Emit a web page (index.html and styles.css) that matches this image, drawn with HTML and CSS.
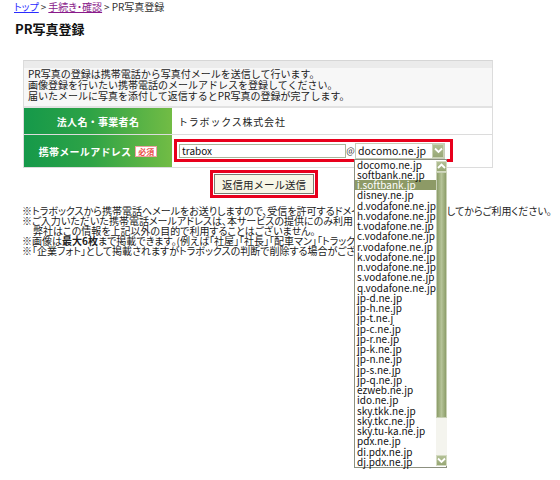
FILE: index.html
```html
<!DOCTYPE html>
<html lang="ja">
<head>
<meta charset="utf-8">
<title>PR写真登録</title>
<link rel="stylesheet" href="styles.css">
</head>
<body>
<div class="crumb"><a href="#" class="top">トップ</a><span class="gt">&gt;</span><a href="#" class="visited">手続き・確認</a><span class="gt">&gt;</span>PR写真登録</div>
<h1 class="title">PR写真登録</h1>
<div class="panel">
  <div class="intro">
    <p>PR写真の登録は携帯電話から写真付メールを送信して行います。</p>
    <p>画像登録を行いたい携帯電話のメールアドレスを登録してください。</p>
    <p>届いたメールに写真を添付して返信するとPR写真の登録が完了します。</p>
  </div>
  <div class="row row1">
    <div class="th">法人名・事業者名</div>
    <div class="td">トラボックス株式会社</div>
  </div>
  <div class="row row2">
    <div class="th">携帯メールアドレス<span class="req">必須</span></div>
    <div class="td">
      <div class="redbox">
        <div class="input">trabox</div>
        <span class="at">@</span>
        <div class="select">
          <span class="sel-text">docomo.ne.jp</span>
          <span class="sel-arrow"><svg width="9" height="7" viewBox="0 0 9 7"><path d="M1 1.5 L4.5 5 L8 1.5" fill="none" stroke="#fff" stroke-width="1.8"/></svg></span>
          <div class="dropdown">
            <ul class="options">
              <li>docomo.ne.jp</li>
              <li>softbank.ne.jp</li>
              <li class="hl">i.softbank.jp</li>
              <li>disney.ne.jp</li>
              <li>d.vodafone.ne.jp</li>
              <li>h.vodafone.ne.jp</li>
              <li>t.vodafone.ne.jp</li>
              <li>c.vodafone.ne.jp</li>
              <li>r.vodafone.ne.jp</li>
              <li>k.vodafone.ne.jp</li>
              <li>n.vodafone.ne.jp</li>
              <li>s.vodafone.ne.jp</li>
              <li>q.vodafone.ne.jp</li>
              <li>jp-d.ne.jp</li>
              <li>jp-h.ne.jp</li>
              <li>jp-t.ne.j</li>
              <li>jp-c.ne.jp</li>
              <li>jp-r.ne.jp</li>
              <li>jp-k.ne.jp</li>
              <li>jp-n.ne.jp</li>
              <li>jp-s.ne.jp</li>
              <li>jp-q.ne.jp</li>
              <li>ezweb.ne.jp</li>
              <li>ido.ne.jp</li>
              <li>sky.tkk.ne.jp</li>
              <li>sky.tkc.ne.jp</li>
              <li>sky.tu-ka.ne.jp</li>
              <li>pdx.ne.jp</li>
              <li>di.pdx.ne.jp</li>
              <li>dj.pdx.ne.jp</li>
            </ul>
            <div class="sbar">
              <span class="sb-btn"><svg width="9" height="7" viewBox="0 0 9 7"><path d="M1 5 L4.5 1.5 L8 5" fill="none" stroke="#fff" stroke-width="1.8"/></svg></span>
              <span class="sb-thumb"></span>
              <span class="sb-track"></span>
              <span class="sb-btn"><svg width="9" height="7" viewBox="0 0 9 7"><path d="M1 1.5 L4.5 5 L8 1.5" fill="none" stroke="#fff" stroke-width="1.8"/></svg></span>
            </div>
          </div>
        </div>
      </div>
    </div>
  </div>
</div>
<div class="btnbox"><button class="send" type="button">返信用メール送信</button></div>
<div class="notes">
  <p>※トラボックスから携帯電話へメールをお送りしますので、受信を許可するドメイン(trabox.jp)を設定してからご利用ください。</p>
  <p>※ご入力いただいた携帯電話メールアドレスは、本サービスの提供にのみ利用させていただきます。</p>
  <p class="indent">弊社はこの情報を上記以外の目的で利用することはございません。</p>
  <p>※画像は<b>最大6枚</b>まで掲載できます。(例えば「社屋」「社長」「配車マン」「トラック」など)</p>
  <p>※「企業フォト」として掲載されますがトラボックスの判断で削除する場合がございます。</p>
</div>
</body>
</html>
```

FILE: styles.css
```css
* { box-sizing: border-box; }
html, body { min-height: 480px; }
body {
  margin: 0;
  font-family: "Noto Sans CJK JP", sans-serif;
  font-size: 10px;
  color: #222;
  background: #fff;
}
p { margin: 0; }
.crumb {
  padding: 1px 0 0 14px;
  line-height: 12px;
  font-size: 10px;
  font-feature-settings: "palt";
  color: #333;
}
.crumb .gt { margin: 0 2px; }
.crumb a { text-decoration: underline; }
.crumb .top { color: #2b2bff; }
.crumb .visited { color: #8a1a8a; }
.title {
  margin: 8px 0 0 15px;
  font-size: 13px;
  line-height: 16px;
  font-weight: bold;
  color: #111;
}
.panel {
  margin: 23px 0 0 23px;
  width: 470px;
  border: 1px solid #dcdcdc;
  border-top: 1px solid #d6d6d6;
}
.intro {
  border-top: 7px solid #ebebeb;
  border-bottom: 2px solid #e2e2e2;
  background: #f7f7f7;
  padding: 0 6px 5px 4px;
  line-height: 11px;
  font-size: 10px;
  color: #222;
}
.row {
  display: grid;
  grid-template-columns: 148px 1fr;
}
.row2 { border-top: 1px solid #dcdcdc; }
.row1 { height: 26px; }
.row2 { height: 33px; }
.th {
  background: linear-gradient(to right, #15994a, #2ea346 45%, #72bc45);
  color: #fff;
  font-weight: bold;
  font-size: 10px;
  display: flex;
  align-items: center;
  justify-content: center;
  letter-spacing: 0.3px;
}
.req {
  margin-left: 4px;
  background: #fff;
  color: #e8504a;
  border: 1px solid #f0a0a0;
  font-size: 8px;
  line-height: 9px;
  padding: 0 2px;
  letter-spacing: 0;
}
.td {
  display: flex;
  align-items: center;
  padding-left: 6px;
  color: #222;
}
.row1 .td { letter-spacing: 0.8px; }
.row2 .td { padding-left: 2px; align-items: flex-start; padding-top: 4px; }
.redbox {
  display: flex;
  align-items: center;
  border: 3px solid #e8001c;
  padding: 1px 5px 1px 2px;
  width: 279px;
  height: 23px;
}
.input {
  width: 167px;
  height: 14px;
  border: 1px solid #a9b79c;
  line-height: 12px;
  padding-left: 2px;
  font-size: 10px;
  color: #111;
  background: #fff;
}
.at {
  width: 9px;
  text-align: center;
  font-size: 9px;
  color: #333;
}
.select {
  position: relative;
  width: 90px;
  height: 16px;
  border: 1px solid #c6ccb8;
  display: flex;
  align-items: center;
  background: #fff;
}
.sel-text {
  flex: 1;
  padding-left: 2px;
  font-size: 10.5px;
  color: #111;
}
.sel-arrow {
  width: 12px;
  height: 14px;
  background: linear-gradient(#b2bf94, #97a775);
  border: 1px solid #c9d2b4;
  display: flex;
  align-items: center;
  justify-content: center;
}
.dropdown {
  position: absolute;
  top: 15px;
  left: -2px;
  width: 93px;
  height: 309px;
  border: 1px solid #8c9080;
  background: #fff;
  display: flex;
  z-index: 5;
}
.options {
  list-style: none;
  margin: 0;
  padding: 0;
  flex: 1;
}
.options li {
  line-height: 10.25px;
  padding-left: 2px;
  font-size: 10px;
  color: #111;
  white-space: nowrap;
}
.options li.hl { background: #8d9a66; color: #fff; }
.sbar {
  width: 12px;
  display: flex;
  flex-direction: column;
  padding: 1px 1px 1px 0;
}
.sb-btn {
  height: 11px;
  background: linear-gradient(#b3c095, #97a775);
  border: 1px solid #d4dbc2;
  display: flex;
  align-items: center;
  justify-content: center;
}
.sb-thumb {
  height: 246px;
  background: linear-gradient(to right, #8c9d69, #b5c398 50%, #8c9d69);
  border: 1px solid #c9d1b6;
}
.sb-track {
  flex: 1;
  background: #f4f4ee;
}
.btnbox {
  margin: 2px 0 0 210px;
  width: 108px;
  height: 28px;
  border: 3px solid #e8001c;
  padding: 1px;
}
.send {
  display: block;
  width: 100%;
  height: 100%;
  margin: 0;
  padding: 0;
  background: #f7f6e6;
  border: 1px solid #7b7b70;
  font-family: "Noto Sans CJK JP", sans-serif;
  font-size: 10.5px;
  color: #222;
}
.notes {
  margin-top: 8px;
  padding-left: 22px;
  line-height: 10px;
  font-size: 10px;
  font-feature-settings: "palt";
  white-space: nowrap;
  color: #222;
}
.notes .indent { padding-left: 11px; }
```
